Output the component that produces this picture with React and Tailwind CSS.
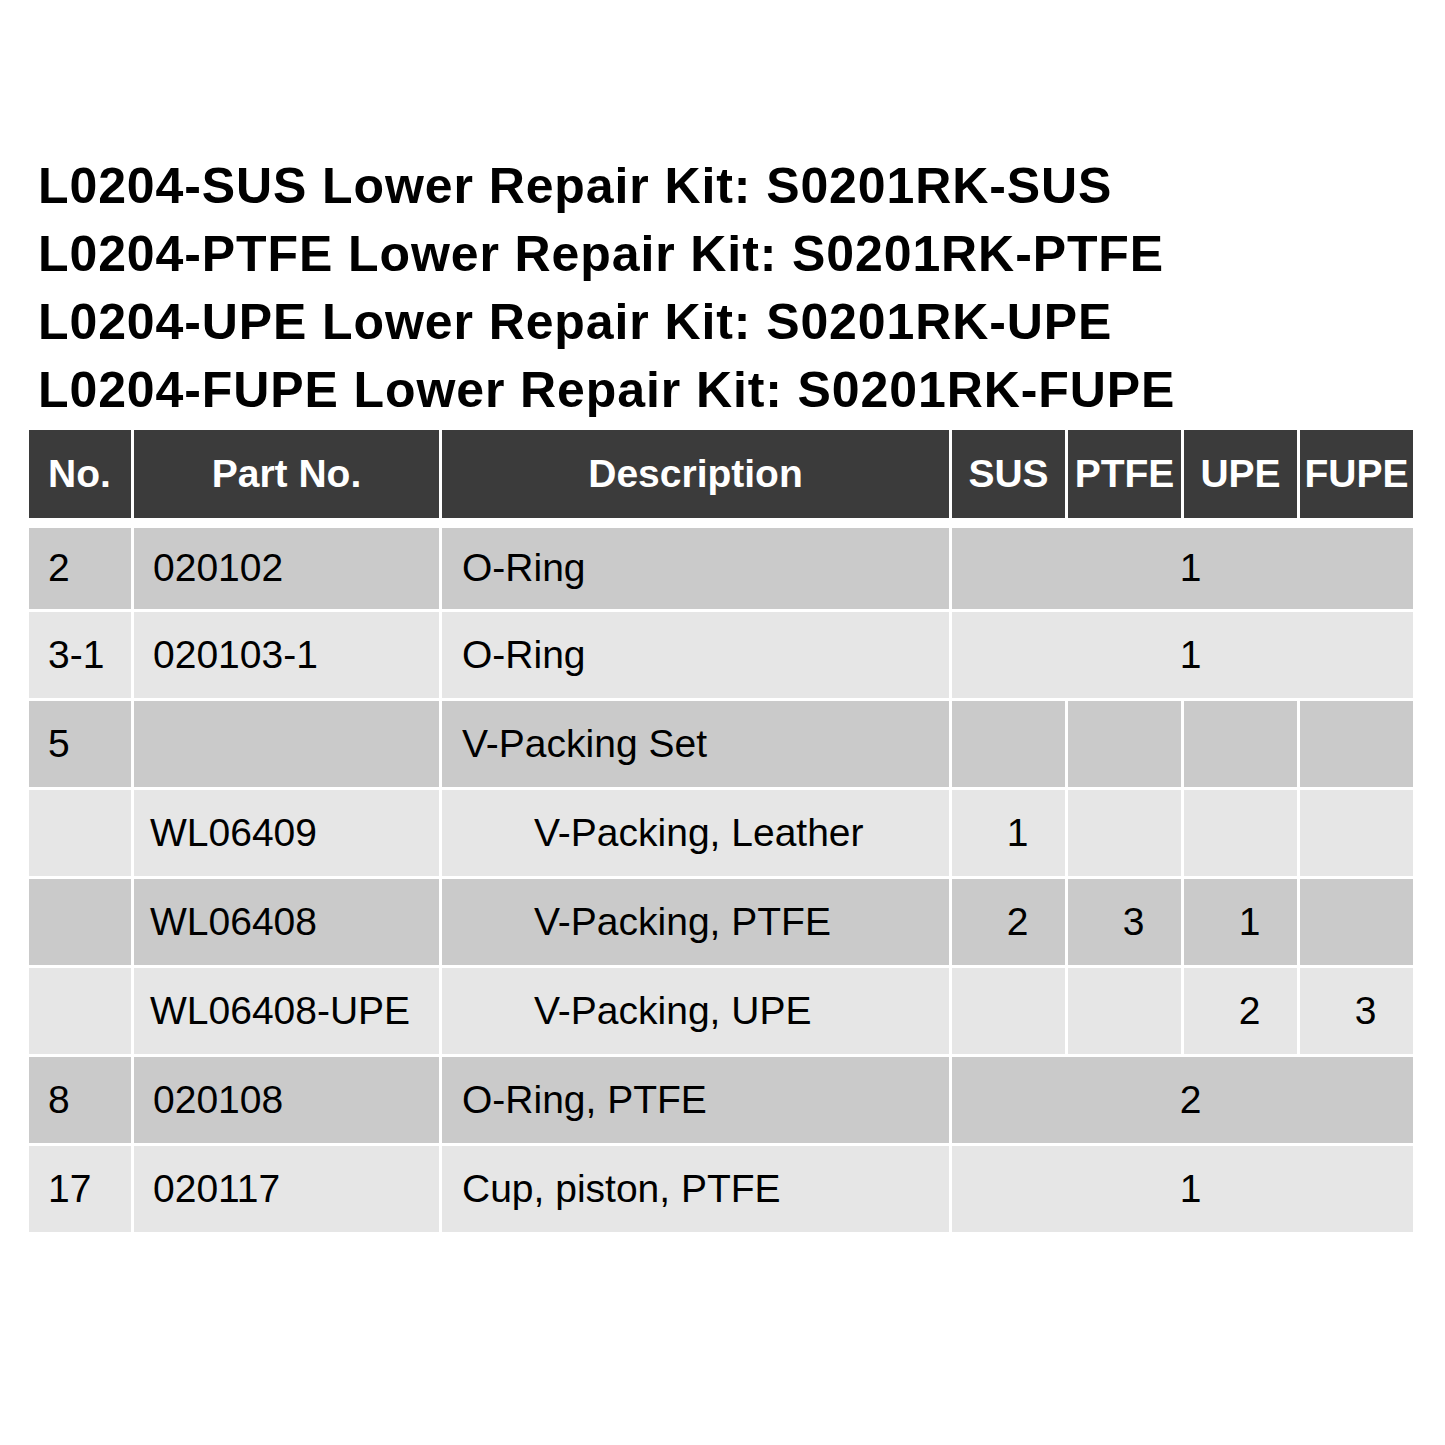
const cols = 'grid grid-cols-[102px_305px_507px_113px_113px_113px_113px] gap-[3px]';

const rows = [
  { no: '2', part: '020102', desc: 'O-Ring', qty: '1', h: 'h-[81px]' },
  { no: '3-1', part: '020103-1', desc: 'O-Ring', qty: '1' },
  { no: '5', part: '', desc: 'V-Packing Set', split: ['', '', '', ''] },
  { no: '', part: 'WL06409', desc: 'V-Packing, Leather', sub: true, split: ['1', '', '', ''] },
  { no: '', part: 'WL06408', desc: 'V-Packing, PTFE', sub: true, split: ['2', '3', '1', ''] },
  { no: '', part: 'WL06408-UPE', desc: 'V-Packing, UPE', sub: true, split: ['', '', '2', '3'] },
  { no: '8', part: '020108', desc: 'O-Ring, PTFE', qty: '2' },
  { no: '17', part: '020117', desc: 'Cup, piston, PTFE', qty: '1' },
];

const titles = [
  'L0204-SUS Lower Repair Kit: S0201RK-SUS',
  'L0204-PTFE Lower Repair Kit: S0201RK-PTFE',
  'L0204-UPE Lower Repair Kit: S0201RK-UPE',
  'L0204-FUPE Lower Repair Kit: S0201RK-FUPE',
];

function Cell({ children, className, bg }) {
  return <div className={`flex items-center ${bg} ${className || ''}`}>{children}</div>;
}

export default function App() {
  return (
    <div className="min-h-[1445px] bg-white pt-[152px] text-black" style={{ fontFamily: '"Liberation Sans", Arial, sans-serif' }}>
      {/* Kit titles */}
      <div className="pl-[38px]">
        {titles.map((t) => (
          <div key={t} className="text-[50px] font-bold leading-[68px] tracking-[0.9px]">{t}</div>
        ))}
      </div>

      <div className="ml-[29px] mt-[6px] w-[1384px]">
        {/* Header */}
        <div className={`${cols} h-[88px] text-[39px] font-bold text-white`}>
          {['No.', 'Part No.', 'Description', 'SUS', 'PTFE', 'UPE', 'FUPE'].map((h, i) => (
            <Cell key={h} bg="bg-[#3b3b3b]" className={i === 0 ? 'pl-[19px]' : 'justify-center'}>
              {h}
            </Cell>
          ))}
        </div>

        {/* Body */}
        <div className={`${cols} mt-[10px] text-[39px]`}>
          {rows.map((r, i) => {
            const bg = i % 2 === 0 ? 'bg-[#cacaca]' : 'bg-[#e6e6e6]';
            const h = r.h || 'h-[86px]';
            return [
              <Cell key={`${i}a`} bg={bg} className={`${h} pl-[19px]`}>{r.no}</Cell>,
              <Cell key={`${i}b`} bg={bg} className={`${h} ${r.sub ? 'pl-[16px]' : 'pl-[19px]'}`}>{r.part}</Cell>,
              <Cell key={`${i}c`} bg={bg} className={`${h} ${r.sub ? 'pl-[92px]' : 'pl-[20px]'}`}>{r.desc}</Cell>,
              ...(r.split
                ? r.split.map((q, j) => (
                    <Cell key={`${i}d${j}`} bg={bg} className={`${h} justify-center pl-[18px]`}>{q}</Cell>
                  ))
                : [
                    <Cell key={`${i}d`} bg={bg} className={`${h} col-span-4 justify-center pl-[16px]`}>{r.qty}</Cell>,
                  ]),
            ];
          })}
        </div>
      </div>
    </div>
  );
}
